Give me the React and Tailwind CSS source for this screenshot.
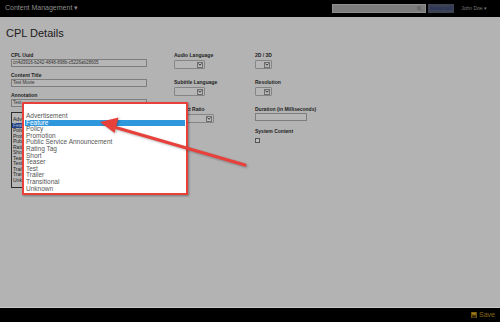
import React from 'react';

/**
 * CPL Details page, dimmed, with the annotation dropdown called out
 */
function Field({ label, children, className = '' }) {
  return (
    <div className={className}>
      <div className="text-[5px] leading-[6px] font-bold text-[#1e1e1e]">{label}</div>
      {children}
    </div>
  );
}

function TextBox({ value = '', className = '' }) {
  return (
    <div className={`h-[8px] border border-[#7e7e7e] bg-[#b6b6b6] px-[1px] text-[4.5px] leading-[6px] text-[#333] overflow-hidden whitespace-nowrap ${className}`}>
      {value}
    </div>
  );
}

function Select({ className = '' }) {
  return (
    <div className={`h-[9px] border border-[#858585] rounded-[1px] bg-[#b6b6b6] flex justify-end items-center pr-[1px] ${className}`}>
      <div className="w-[6px] h-[6px] border border-[#6e6e6e] bg-[#bdbdbd] flex items-center justify-center">
        <svg width="4" height="3" viewBox="0 0 4 3">
          <path d="M0.4 0.5 L2 2.3 L3.6 0.5" fill="none" stroke="#222" strokeWidth="0.9" />
        </svg>
      </div>
    </div>
  );
}

const types = [
  'Advertisement',
  'Feature',
  'Policy',
  'Promotion',
  'Public Service Announcement',
  'Rating Tag',
  'Short',
  'Teaser',
  'Test',
  'Trailer',
  'Transitional',
  'Unknown',
];

export default function App() {
  return (
    <div className="relative w-[500px] h-[322px] flex flex-col bg-[#b3b3b3] overflow-hidden" style={{ fontFamily: '"Liberation Sans", Arial, sans-serif' }}>
      {/* Top bar */}
      <div className="h-[17px] bg-black flex items-center pl-[5px] pr-[13px]">
        <span className="text-[7px] text-[#8c8c8c]">Content Management ▾</span>
        <div className="ml-auto flex items-center">
          <div className="w-[94px] h-[9px] bg-[#7c7c7c] border border-[#8e8e8e] flex items-center justify-end pr-[3px]">
            <svg width="5" height="5" viewBox="0 0 10 10">
              <circle cx="4" cy="4" r="3" fill="none" stroke="#555" strokeWidth="1.4" />
              <path d="M6.3 6.3 L9 9" stroke="#555" strokeWidth="1.6" />
            </svg>
          </div>
          <div className="ml-[2px] h-[9px] px-[2px] bg-[#3c4252] text-[5px] leading-[9px] text-[#1c2a66]">Advanced</div>
          <span className="ml-[7px] text-[5px] text-[#7a7a7a]">John Doe ▾</span>
        </div>
      </div>

      {/* Content */}
      <div className="flex-1 border-b border-[#c9c9c9]">
        <h1 className="mt-[10px] ml-[6px] text-[11px] leading-[13px] text-[#1a1a1a]">CPL Details</h1>

        <div className="flex mt-[12px]">
          {/* Left column */}
          <div className="w-[174px] pl-[11px] flex flex-col gap-[5px]">
            <Field label="CPL Uuid">
              <TextBox className="w-[136px] mt-[1px]" value="cn4d3916-b242-4848-898b-c5226ab28605" />
            </Field>
            <Field label="Content Title">
              <TextBox className="w-[136px] mt-[1px]" value="Test Movie" />
            </Field>
            <Field label="Annotation">
              <TextBox className="w-[136px] mt-[1px]" value="Test" />
            </Field>
          </div>

          {/* Middle column */}
          <div className="w-[81px] flex flex-col gap-[10px]">
            <Field label="Audio Language">
              <Select className="w-[31px] mt-[2px]" />
            </Field>
            <Field label="Subtitle Language">
              <Select className="w-[31px] mt-[2px]" />
            </Field>
            <Field label="Aspect Ratio">
              <Select className="w-[40px] mt-[2px]" />
            </Field>
          </div>

          {/* Right column */}
          <div className="flex flex-col gap-[10px]">
            <Field label="2D / 3D">
              <Select className="w-[17px] mt-[2px]" />
            </Field>
            <Field label="Resolution">
              <Select className="w-[17px] mt-[2px]" />
            </Field>
            <Field label="Duration (in Milliseconds)">
              <TextBox className="w-[52px] mt-[1px]" />
            </Field>
            <Field label="System Content" className="-mt-[3px]">
              <div className="mt-[4px] w-[5px] h-[5px] border border-[#555] bg-[#bdbdbd]" />
            </Field>
          </div>
        </div>
      </div>

      {/* Bottom bar */}
      <div className="h-[14px] bg-black flex items-center justify-end pr-[5px]">
        <svg width="6" height="6" viewBox="0 0 6 6" className="mr-[2px]">
          <rect x="0" y="0" width="6" height="6" fill="#6b5010" />
          <rect x="1" y="0.5" width="4" height="2" fill="#a27a16" />
          <rect x="1.2" y="3.5" width="3.6" height="2" fill="#2a2008" />
        </svg>
        <span className="text-[7px] text-[#8a6714]">Save</span>
      </div>

      {/* Native listbox under the annotation field */}
      <div className="absolute left-[11px] top-[112px] w-[16px] h-[76px] border border-[#2e2e2e] bg-[#b6b6b6] pt-[4px] text-[5px] leading-[5.5px] text-[#1e1e1e] overflow-hidden whitespace-nowrap">
        {types.map((t) => (
          <div key={t} className={t === 'Feature' ? 'bg-[#1d3f8c] text-[#b6b6b6] pl-[1px]' : 'pl-[1px]'}>{t}</div>
        ))}
      </div>

      {/* Zoomed callout */}
      <div className="absolute left-[22px] top-[102px] w-[166px] h-[93px] border-2 border-[#e8403a] bg-white pt-[9px] px-[1px] shadow-[1px_1px_2px_rgba(0,0,0,0.35)] text-[6.5px] leading-[6.6px] text-[#555] whitespace-nowrap">
        {types.map((t) => (
          <div key={t} className={t === 'Feature' ? 'bg-[#2f97db] text-white pl-[1px]' : 'pl-[1px]'}>{t}</div>
        ))}
      </div>

      {/* Arrow */}
      <svg className="absolute left-0 top-0 pointer-events-none" width="500" height="322" viewBox="0 0 500 322">
        <g style={{ filter: 'drop-shadow(1px 1px 1px rgba(0,0,0,0.3))' }}>
          <path d="M245 165 L114 127" stroke="#e8403a" strokeWidth="3" strokeLinecap="round" />
          <path d="M100 122 L118.5 117.5 L114.5 133 Z" fill="#e8403a" />
        </g>
      </svg>
    </div>
  );
}
